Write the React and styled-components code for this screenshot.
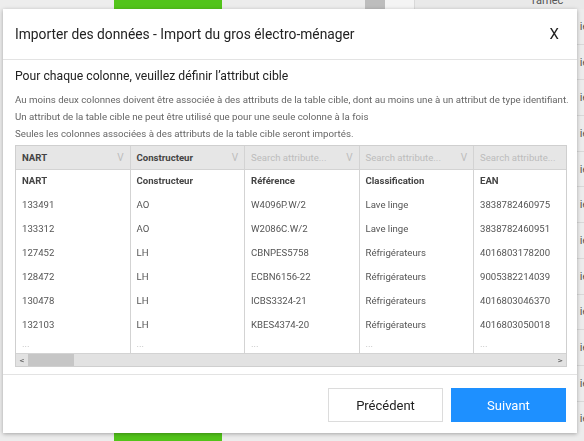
import React from "react";
import styled, { createGlobalStyle } from "styled-components";

const Global = createGlobalStyle`
  html, body { margin: 0; padding: 0; }
  body { font-family: Roboto, "Liberation Sans", Arial, sans-serif; background: #ececec; overflow: hidden; }
  * { box-sizing: border-box; }
`;

const Page = styled.div`
  width: 584px;
  height: 441px;
  display: flex;
  flex-direction: column;
  background: #ebebeb;
`;

const Strip = styled.div`
  display: flex;
  height: 9px;
  flex: none;
`;

const StripCell = styled.div`
  width: ${(p) => p.w}px;
  flex: none;
  background: ${(p) => p.bg || "#ececec"};
  border-right: ${(p) => (p.sep ? "1px solid #d9d9d9" : "none")};
  font-size: 11px;
  color: #555;
  line-height: 1px;
  padding-left: ${(p) => p.pl || 0}px;
  overflow: hidden;
  white-space: nowrap;
`;

const Middle = styled.div`
  flex: 1;
  display: flex;
  justify-content: flex-end;
  overflow: hidden;
`;

const SideCol = styled.div`
  width: 7px;
  display: flex;
  flex-direction: column;
  background: #ececec;
`;

const SideRow = styled.div`
  height: 35.7px;
  flex: none;
  border-bottom: 1px solid #d8d8d8;
  font-size: 11px;
  color: #555;
  display: flex;
  align-items: center;
  white-space: nowrap;
  overflow: hidden;
`;

const Modal = styled.div`
  position: fixed;
  left: 3px;
  top: 9px;
  width: 574px;
  height: 424px;
  background: #fff;
  box-shadow: 0 1px 4px rgba(0, 0, 0, 0.3);
  display: flex;
  flex-direction: column;
`;

const Header = styled.div`
  height: 51px;
  flex: none;
  display: flex;
  align-items: center;
  justify-content: space-between;
  padding: 0 18px 0 12px;
  border-bottom: 1px solid #e3e3e3;
`;

const Title = styled.div`
  font-size: 13.8px;
  color: #222;
`;

const Close = styled.button`
  border: none;
  background: none;
  padding: 0;
  font-family: inherit;
  font-size: 15px;
  color: #222;
  cursor: pointer;
`;

const Body = styled.div`
  flex: 1;
  padding: 8px 10px 0 12px;
  display: flex;
  flex-direction: column;
  min-height: 0;
`;

const Heading = styled.div`
  font-size: 12.2px;
  color: #222;
  line-height: 17px;
  margin-bottom: 6px;
`;

const Note = styled.div`
  font-size: 9.7px;
  color: #666;
  line-height: 17px;
  white-space: nowrap;
`;

const TableBox = styled.div`
  margin-top: 3px;
  border: 1px solid #cfcfcf;
  display: flex;
  flex-direction: column;
  overflow: hidden;
`;

const Columns = styled.div`
  display: flex;
  overflow: hidden;
`;

const Column = styled.div`
  width: 114.5px;
  flex: none;
  border-right: 1px solid #d3d3d3;
  display: flex;
  flex-direction: column;
`;

const HeadCell = styled.div`
  height: 24px;
  background: #e6e6e6;
  border-bottom: 1px solid #d3d3d3;
  display: flex;
  align-items: center;
  justify-content: space-between;
  padding: 0 6px 0 6px;
  font-size: 9.6px;
  font-weight: ${(p) => (p.placeholder ? 400 : 700)};
  color: ${(p) => (p.placeholder ? "#bcbcbc" : "#444")};
  white-space: nowrap;
`;

const Chevron = styled.span`
  font-weight: 400;
  color: #bdbdbd;
  font-size: 10px;
`;

const Cell = styled.div`
  height: ${(p) => (p.short ? 15 : 24)}px;
  display: flex;
  align-items: ${(p) => (p.short ? "flex-start" : "center")};
  padding: 0 6px ${(p) => (p.short ? 0 : 4)}px;
  font-size: 9.6px;
  font-weight: ${(p) => (p.bold ? 700 : 400)};
  color: ${(p) => (p.bold ? "#444" : p.short ? "#bbb" : "#555")};
  white-space: nowrap;
  overflow: hidden;
`;

const ScrollBar = styled.div`
  height: 13px;
  background: #e2e2e2;
  border-top: 1px solid #d3d3d3;
  display: flex;
  align-items: center;
  font-size: 10px;
  color: #555;
`;

const Arrow = styled.span`
  width: 12px;
  text-align: center;
  flex: none;
  transform: scaleY(0.8);
`;

const Thumb = styled.div`
  width: 46px;
  height: 100%;
  background: #c6c6c6;
  flex: none;
`;

const Track = styled.div`
  flex: 1;
`;

const Footer = styled.div`
  height: 59px;
  flex: none;
  border-top: 1px solid #e3e3e3;
  display: flex;
  justify-content: flex-end;
  align-items: flex-start;
  padding: 13px 11px 0 0;
  gap: 8px;
`;

const Button = styled.button`
  width: 115px;
  height: 34px;
  font-family: inherit;
  font-size: 13px;
  border: 1px solid ${(p) => (p.primary ? "#1e90ff" : "#dcdcdc")};
  background: ${(p) => (p.primary ? "#1e90ff" : "#fff")};
  color: ${(p) => (p.primary ? "#fff" : "#222")};
  cursor: pointer;
`;

const columns = [
  { head: "NART", cells: ["NART", "133491", "133312", "127452", "128472", "130478", "132103"] },
  { head: "Constructeur", cells: ["Constructeur", "AO", "AO", "LH", "LH", "LH", "LH"] },
  { head: null, cells: ["Référence", "W4096P.W/2", "W2086C.W/2", "CBNPES5758", "ECBN6156-22", "ICBS3324-21", "KBES4374-20"] },
  { head: null, cells: ["Classification", "Lave linge", "Lave linge", "Réfrigérateurs", "Réfrigérateurs", "Réfrigérateurs", "Réfrigérateurs"] },
  { head: null, cells: ["EAN", "3838782460975", "3838782460951", "4016803178200", "9005382214039", "4016803046370", "4016803050018"] },
];

export default function App() {
  return (
    <>
      <Global />
      <Page>
        <Strip>
          <StripCell w={114} bg="#ededed" />
          <StripCell w={108} bg="#52c41a" />
          <StripCell w={143} bg="#ececec" />
          <StripCell w={20} bg="#bdbdbd" />
          <StripCell w={30} bg="#f4f4f4" sep />
          <StripCell w={169} bg="#e9e9e9" pl={115}>Tarnec</StripCell>
        </Strip>
        <Middle>
          <SideCol>
            {Array.from({ length: 12 }).map((_, i) => (
              <SideRow key={i}>&nbsp;ie</SideRow>
            ))}
          </SideCol>
        </Middle>
        <Strip>
          <StripCell w={114} bg="#ececec" />
          <StripCell w={108} bg="#52c41a" />
          <StripCell w={362} bg="#ececec" />
        </Strip>
      </Page>
      <Modal>
        <Header>
          <Title>Importer des données - Import du gros électro-ménager</Title>
          <Close>X</Close>
        </Header>
        <Body>
          <Heading>Pour chaque colonne, veuillez définir l’attribut cible</Heading>
          <Note>Au moins deux colonnes doivent être associée à des attributs de la table cible, dont au moins une à un attribut de type identifiant.</Note>
          <Note>Un attribut de la table cible ne peut être utilisé que pour une seule colonne à la fois</Note>
          <Note>Seules les colonnes associées à des attributs de la table cible seront importés.</Note>
          <TableBox>
            <Columns>
              {columns.map((c, i) => (
                <Column key={i}>
                  <HeadCell placeholder={!c.head}>
                    <span>{c.head || "Search attribute..."}</span>
                    <Chevron>V</Chevron>
                  </HeadCell>
                  {c.cells.map((v, j) => (
                    <Cell key={j} bold={j === 0}>{v}</Cell>
                  ))}
                  <Cell short>...</Cell>
                </Column>
              ))}
            </Columns>
            <ScrollBar>
              <Arrow>&lt;</Arrow>
              <Thumb />
              <Track />
              <Arrow>&gt;</Arrow>
            </ScrollBar>
          </TableBox>
        </Body>
        <Footer>
          <Button>Précédent</Button>
          <Button primary>Suivant</Button>
        </Footer>
      </Modal>
    </>
  );
}
